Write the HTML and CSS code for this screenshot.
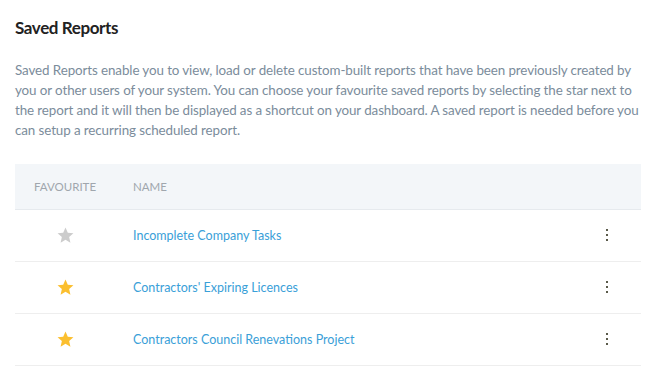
FILE: index.html
```html
<!DOCTYPE html>
<html>

<head>
    <meta charset="UTF-8">
    <meta name="viewport" content="width=device-width, initial-scale=1">
    <title>Saved Reports</title>
    <link rel="stylesheet" href="styles.css">
</head>

<body>
    <!-- page section -->
    <div class="section">
        <h2 class="title">Saved Reports</h2>
        <p class="intro">
            Saved Reports enable you to view, load or delete custom-built reports that have been previously created by
            you or other users of your system. You can choose your favourite saved reports by selecting the star next to
            the report and it will then be displayed as a shortcut on your dashboard. A saved report is needed before you
            can setup a recurring scheduled report.
        </p>

        <!-- reports table -->
        <div class="table">
            <div class="row head">
                <div class="col-fav">Favourite</div>
                <div class="col-name">Name</div>
                <div class="col-menu"></div>
            </div>
            <div class="row">
                <div class="col-fav">
                    <svg class="star off" viewBox="0 0 24 24"><path d="M12 2l2.9 6.6 7.1.6-5.4 4.7 1.6 7.1L12 17.3 5.8 21l1.6-7.1L2 9.2l7.1-.6z"/></svg>
                </div>
                <div class="col-name"><a href="#">Incomplete Company Tasks</a></div>
                <div class="col-menu">
                    <svg class="kebab" viewBox="0 0 3 13"><rect x="0" y="0" width="2" height="2"/><rect x="0" y="5" width="2" height="2"/><rect x="0" y="10" width="2" height="2"/></svg>
                </div>
            </div>
            <div class="row">
                <div class="col-fav">
                    <svg class="star on" viewBox="0 0 24 24"><path d="M12 2l2.9 6.6 7.1.6-5.4 4.7 1.6 7.1L12 17.3 5.8 21l1.6-7.1L2 9.2l7.1-.6z"/></svg>
                </div>
                <div class="col-name"><a href="#">Contractors' Expiring Licences</a></div>
                <div class="col-menu">
                    <svg class="kebab" viewBox="0 0 3 13"><rect x="0" y="0" width="2" height="2"/><rect x="0" y="5" width="2" height="2"/><rect x="0" y="10" width="2" height="2"/></svg>
                </div>
            </div>
            <div class="row">
                <div class="col-fav">
                    <svg class="star on" viewBox="0 0 24 24"><path d="M12 2l2.9 6.6 7.1.6-5.4 4.7 1.6 7.1L12 17.3 5.8 21l1.6-7.1L2 9.2l7.1-.6z"/></svg>
                </div>
                <div class="col-name"><a href="#">Contractors Council Renevations Project</a></div>
                <div class="col-menu">
                    <svg class="kebab" viewBox="0 0 3 13"><rect x="0" y="0" width="2" height="2"/><rect x="0" y="5" width="2" height="2"/><rect x="0" y="10" width="2" height="2"/></svg>
                </div>
            </div>
        </div>
    </div>
</body>

</html>
```

FILE: styles.css
```css
body {
    margin: 0px;
    background-color: #ffffff;
}

* {
    box-sizing: border-box;
    font-family: 'Lato', 'Liberation Sans', sans-serif;
}

.section {
    padding: 16px 14px 0 15px;
}

.title {
    margin: 0;
    font-size: 17px;
    font-weight: 700;
    color: #222222;
    letter-spacing: -0.4px;
    line-height: 24px;
}

.intro {
    margin: 20px 0 0 0;
    font-size: 13.4px;
    letter-spacing: -0.1px;
    line-height: 20px;
    color: #7b8c9b;
}

.table {
    margin-top: 24px;
    width: 626px;
}

.row {
    display: flex;
    align-items: center;
    height: 52px;
    border-bottom: 1px solid #eeeeee;
}

.row.head {
    height: 46px;
    background-color: #f3f6f9;
    border-bottom: 1px solid #e6eaee;
}

.row.head div {
    font-size: 11.5px;
    text-transform: uppercase;
    color: #a0a6ad;
}

.col-fav {
    width: 98px;
    display: flex;
    justify-content: center;
    padding-left: 2px;
}

.col-name {
    flex: 1;
    padding-left: 20px;
    font-size: 12.5px;
}

.col-name a {
    color: #3aa0d8;
    text-decoration: none;
}

.col-menu {
    width: 68px;
    display: flex;
    justify-content: center;
}

.star {
    width: 19px;
    height: 19px;
}

.star.off {
    fill: #cccccc;
}

.star.on {
    fill: #fbbf2f;
}

.kebab {
    width: 3px;
    height: 13px;
    fill: #5a5a4a;
}
```
